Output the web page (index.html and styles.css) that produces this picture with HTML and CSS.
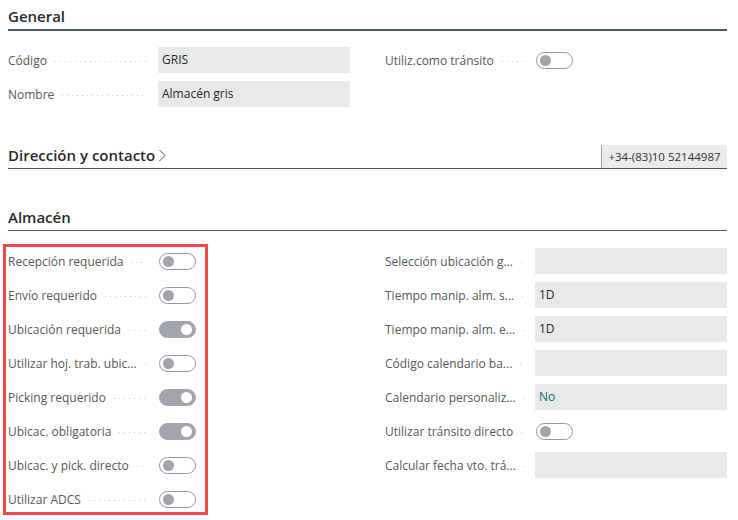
FILE: index.html
```html
<!DOCTYPE html>
<html lang="es">
<head>
<meta charset="utf-8">
<title>Almacén GRIS</title>
<link rel="stylesheet" href="styles.css">
</head>
<body>
<main class="page">
  <section class="group">
    <div class="group-head head-strong"><h2>General</h2></div>
    <div class="grid grid-general">
      <div class="col">
        <div class="field"><div class="caption"><span class="label">Código</span><span class="leader"></span></div><div class="value">GRIS</div></div>
        <div class="field"><div class="caption"><span class="label">Nombre</span><span class="leader"></span></div><div class="value">Almacén gris</div></div>
      </div>
      <div class="col">
        <div class="field"><div class="caption"><span class="label">Utiliz.como tránsito</span><span class="leader"></span></div><span class="toggle"></span></div>
      </div>
    </div>
  </section>

  <section class="group group-next">
    <div class="group-head">
      <h2>Dirección y contacto<svg class="chevron" width="8" height="13" viewBox="0 0 8 13"><polyline points="1.5,1 7,6.5 1.5,12" fill="none" stroke="#505050" stroke-width="1"/></svg></h2>
      <div class="phone">+34-(83)10 52144987</div>
    </div>
  </section>

  <section class="group group-next">
    <div class="group-head"><h2>Almacén</h2></div>
    <div class="grid grid-almacen">
      <div class="col col-highlight">
        <div class="field"><div class="caption"><span class="label">Recepción requerida</span><span class="leader"></span></div><span class="toggle"></span></div>
        <div class="field"><div class="caption"><span class="label">Envío requerido</span><span class="leader"></span></div><span class="toggle"></span></div>
        <div class="field"><div class="caption"><span class="label">Ubicación requerida</span><span class="leader"></span></div><span class="toggle on"></span></div>
        <div class="field"><div class="caption"><span class="label">Utilizar hoj. trab. ubic...</span><span class="leader"></span></div><span class="toggle"></span></div>
        <div class="field"><div class="caption"><span class="label">Picking requerido</span><span class="leader"></span></div><span class="toggle on"></span></div>
        <div class="field"><div class="caption"><span class="label">Ubicac. obligatoria</span><span class="leader"></span></div><span class="toggle on"></span></div>
        <div class="field"><div class="caption"><span class="label">Ubicac. y pick. directo</span><span class="leader"></span></div><span class="toggle"></span></div>
        <div class="field"><div class="caption"><span class="label">Utilizar ADCS</span><span class="leader"></span></div><span class="toggle"></span></div>
        <div class="highlight"></div>
      </div>
      <div class="col">
        <div class="field"><div class="caption"><span class="label">Selección ubicación g...</span><span class="leader"></span></div><div class="value"></div></div>
        <div class="field"><div class="caption"><span class="label">Tiempo manip. alm. s...</span><span class="leader"></span></div><div class="value">1D</div></div>
        <div class="field"><div class="caption"><span class="label">Tiempo manip. alm. e...</span><span class="leader"></span></div><div class="value">1D</div></div>
        <div class="field"><div class="caption"><span class="label">Código calendario ba...</span><span class="leader"></span></div><div class="value"></div></div>
        <div class="field"><div class="caption"><span class="label">Calendario personaliz...</span><span class="leader"></span></div><div class="value link">No</div></div>
        <div class="field"><div class="caption"><span class="label">Utilizar tránsito directo</span><span class="leader"></span></div><span class="toggle"></span></div>
        <div class="field"><div class="caption"><span class="label">Calcular fecha vto. trá...</span><span class="leader"></span></div><div class="value"></div></div>
      </div>
    </div>
  </section>
</main>
</body>
</html>
```

FILE: styles.css
```css
html, body {
  margin: 0;
  padding: 0;
  background: #ffffff;
}

body {
  font-family: "Open Sans", "Noto Sans", "Liberation Sans", sans-serif;
  font-size: 12px;
  color: #505050;
}

.page {
  width: 719px;
  padding: 0 11px 5px 8px;
}

.group-head {
  display: flex;
  align-items: flex-end;
  justify-content: space-between;
  padding-top: 5px;
  border-bottom: 1px solid #4f5968;
}

.head-strong {
  border-bottom: 2px solid #4f5968;
}

.group-head h2 {
  margin: 0;
  padding-bottom: 2px;
  font-size: 15px;
  line-height: 22px;
  font-weight: 600;
  color: #2a2a2a;
  display: flex;
  align-items: center;
}

.group-next {
  margin-top: 32px;
}

.chevron {
  margin-left: 3px;
  margin-top: 1px;
}

.phone {
  width: 126px;
  height: 23px;
  box-sizing: border-box;
  border-left: 1px solid #a0a0a0;
  background: #ebebeb;
  color: #333333;
  font-size: 11.5px;
  line-height: 23px;
  text-align: center;
}

.grid {
  display: grid;
  grid-template-columns: 342px 342px;
  column-gap: 35px;
}

.grid-general {
  margin-top: 16px;
}

.grid-almacen {
  margin-top: 17px;
}

.col {
  display: flex;
  flex-direction: column;
  gap: 8px;
}

.col-highlight {
  position: relative;
}

.highlight {
  position: absolute;
  left: -5px;
  top: -4px;
  width: 205px;
  bottom: -3px;
  box-sizing: border-box;
  border: 3px solid #f24848;
  pointer-events: none;
}

.field {
  display: flex;
  align-items: center;
  height: 26px;
}

.caption {
  width: 150px;
  flex: none;
  display: flex;
  align-items: center;
  padding-right: 12px;
  box-sizing: border-box;
}

.label {
  white-space: nowrap;
  color: #585858;
}

.leader {
  flex: 1;
  min-width: 4px;
  height: 1px;
  margin-left: 8px;
  margin-top: 3px;
  background-image: linear-gradient(to right, #cacaca 1px, transparent 1px);
  background-size: 5px 1px;
  background-repeat: repeat-x;
}

.value {
  width: 192px;
  height: 26px;
  box-sizing: border-box;
  padding-left: 4px;
  background: #e9e9ea;
  color: #262626;
  line-height: 26px;
  font-size: 12px;
}

.value.link {
  color: #00737c;
}

.toggle {
  position: relative;
  width: 37px;
  height: 17px;
  box-sizing: border-box;
  margin-left: 1px;
  border: 1px solid #95979c;
  border-radius: 9px;
  background: #ffffff;
}

.toggle::after {
  content: "";
  position: absolute;
  left: 3px;
  top: 2px;
  width: 11px;
  height: 11px;
  border-radius: 50%;
  background: #a2a5ab;
}

.toggle.on {
  background: #a2a5ab;
  border-color: #a2a5ab;
}

.toggle.on::after {
  left: auto;
  right: 3px;
  background: #ffffff;
}
```
